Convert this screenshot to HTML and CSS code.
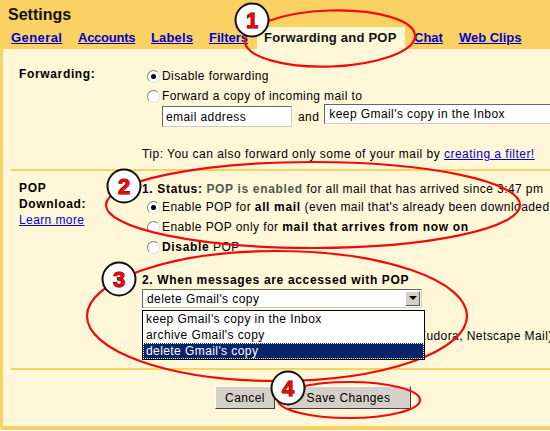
FILE: index.html
```html
<!DOCTYPE html>
<html lang="en">
<head>
<meta charset="utf-8">
<title>Settings</title>
<link rel="stylesheet" href="styles.css">
</head>
<body>
<div class="page">
  <header class="head">
    <h1 class="title">Settings</h1>
    <nav class="tabs">
      <a class="tab t-general" href="#">General</a>
      <a class="tab t-accounts" href="#">Accounts</a>
      <a class="tab t-labels" href="#">Labels</a>
      <a class="tab t-filters" href="#">Filters</a>
      <span class="tab active">Forwarding and POP</span>
      <a class="tab" href="#">Chat</a>
      <a class="tab" href="#">Web Clips</a>
    </nav>
  </header>
  <main class="panel">
    <section class="row forward">
      <div class="label">Forwarding:</div>
      <div class="body">
        <div class="opt"><span class="radio on"></span>Disable forwarding</div>
        <div class="opt"><span class="radio"></span>Forward a copy of incoming mail to</div>
        <div class="fields">
          <span class="input">email address</span>
          <span class="and">and</span>
          <span class="wide">keep Gmail's copy in the Inbox</span>
        </div>
        <div class="tip">Tip: You can also forward only some of your mail by <a href="#">creating a filter!</a></div>
      </div>
    </section>
    <section class="row pop">
      <div class="label">POP<br>Download:<br><a class="learn" href="#">Learn more</a></div>
      <div class="body">
        <div class="status"><b>1. Status:</b> <b class="grey">POP is enabled</b> for all mail that has arrived since 3:47 pm</div>
        <div class="opt"><span class="radio on"></span>Enable POP for&nbsp;<b>all mail</b>&nbsp;(even mail that's already been downloaded)</div>
        <div class="opt"><span class="radio"></span>Enable POP only for&nbsp;<b>mail that arrives from now on</b></div>
        <div class="opt"><span class="radio"></span><b>Disable</b>&nbsp;POP</div>
        <div class="when"><b>2. When messages are accessed with POP</b></div>
        <div class="combo">
          <div class="combo-box">delete Gmail's copy<span class="arrow"></span></div>
          <ul class="list">
            <li>keep Gmail's copy in the Inbox</li>
            <li>archive Gmail's copy</li>
            <li class="sel">delete Gmail's copy</li>
          </ul>
          <div class="behind">Eudora, Netscape Mail)</div>
        </div>
      </div>
    </section>
    <section class="actions">
      <button class="btn cancel" type="button">Cancel</button>
      <button class="btn save" type="button">Save Changes</button>
    </section>
  </main>
  <svg class="notes" width="550" height="431" viewBox="0 0 550 431" aria-hidden="true">
    <g class="rings">
      <ellipse cx="330" cy="38.5" rx="85" ry="28" transform="rotate(-2 330 38.5)"/>
      <ellipse cx="313" cy="205" rx="207" ry="43"/>
      <ellipse cx="277" cy="316" rx="190" ry="65"/>
      <ellipse cx="349" cy="400" rx="71" ry="18"/>
    </g>
    <g class="badges">
      <circle cx="252" cy="20" r="16.5"/>
      <circle cx="124" cy="186" r="16.5"/>
      <circle cx="119" cy="279" r="16.5"/>
      <circle cx="288" cy="388" r="16.5"/>
    </g>
    <g class="nums">
      <text x="252" y="28">1</text>
      <text x="124" y="194">2</text>
      <text x="119" y="287">3</text>
      <text x="288" y="396">4</text>
    </g>
  </svg>
</div>
</body>
</html>
```
FILE: styles.css
```css
* { box-sizing: border-box; }
html, body { margin: 0; padding: 0; background: #fff; }
body { font: 12px/16px "Liberation Sans", Arial, sans-serif; letter-spacing: .42px; color: #000; }
a { color: #00c; }
b { letter-spacing: .66px; }
.page { position: relative; width: 550px; height: 430px; overflow: hidden; background: #fad163; border-bottom-left-radius: 3px; }
.head { height: 49px; background: #fad163; display: flex; flex-direction: column; }
.title { margin: 0; padding: 5px 0 0 8px; height: 27px; font-size: 16px; line-height: 19px; font-weight: bold; letter-spacing: 0; color: #111; }
.tabs { display: flex; gap: 16px; height: 22px; padding-left: 11px; white-space: nowrap; }
.tab { flex: none; font-weight: bold; font-size: 13px; line-height: 22px; letter-spacing: 0; }
.t-general { width: 51px; letter-spacing: .42px; }
.t-accounts { width: 57px; letter-spacing: -.25px; }
.t-labels { width: 42px; letter-spacing: .15px; }
.t-filters { width: 41px; }
.tab.active { background: #fff7d7; color: #111; width: 148px; padding: 0 0 0 7px; margin: 0 -7px 0 -9px; letter-spacing: .22px; }
.panel { margin-left: 3px; height: 377px; background: #fff7d7; display: flex; flex-direction: column; overflow: hidden; }
.row { display: flex; margin-left: 8px; border-bottom: 2px solid #fad163; flex: none; }
.forward { height: 122px; padding-top: 17px; }
.pop { height: 199px; padding-top: 9px; }
.label { width: 131px; padding-left: 8px; font-weight: bold; font-size: 12px; letter-spacing: .65px; flex: none; }
.learn { font-weight: normal; letter-spacing: .4px; }
.body { flex: none; width: 420px; white-space: nowrap; }
.opt { display: flex; align-items: center; height: 20px; padding-left: 5px; }
.radio { width: 13px; height: 13px; border-radius: 50%; background: #fff; border: 1px solid #808080; border-right-color: #ddd; border-bottom-color: #ddd; margin-right: 2px; flex: none; position: relative; }
.radio.on::after { content: ""; position: absolute; left: 3px; top: 3px; width: 5px; height: 5px; border-radius: 50%; background: #000; }
.fields { display: flex; align-items: flex-start; padding-left: 20px; margin-top: -2px; height: 25px; }
.input { flex: none; width: 130px; height: 21px; margin-top: 2px; background: #fff; border: 1px solid; border-color: #666 #ccc #ccc #666; padding: 2px 3px; }
.and { flex: none; margin: 5px 5px 0 6px; }
.wide { flex: none; width: 300px; height: 20px; background: #fff; border: 1px solid; border-color: #666 #ccc #ccc #666; padding: 1px 4px; }
.tip { margin-top: 17px; letter-spacing: .48px; }
.status { height: 17px; padding-top: 1px; }
.grey { color: #4d5a55; }
.when { margin-top: 15px; height: 16px; }
.combo { position: relative; margin-top: 1px; }
.combo-box { position: relative; width: 280px; height: 19px; background: #fff; border: 1px solid; border-color: #666 #ccc #ccc #666; padding: 1px 4px; }
.arrow { position: absolute; right: 1px; top: 1px; width: 15px; height: 15px; background: #d4d0c8; border: 1px solid; border-color: #fff #555 #555 #fff; }
.arrow::after { content: ""; position: absolute; left: 3px; top: 4px; border: 4px solid transparent; border-top: 4px solid #000; border-bottom: 0; }
.list { position: absolute; z-index: 2; left: 0; top: 21px; width: 283px; height: 50px; margin: 0; padding: 0; list-style: none; background: #fff; border: 1px solid #000; }
.list li { height: 16px; padding-left: 3px; line-height: 16px; }
.list .sel { background: #0a246a; color: #fff; outline: 1px dotted #fff; outline-offset: -1px; }
.behind { position: absolute; left: 276px; top: 39px; }
.actions { display: flex; padding: 16px 0 0 212px; gap: 11px; }
.btn { font: 12px "Liberation Sans", Arial, sans-serif; letter-spacing: .42px; height: 23px; background: #d4d0c8; color: #000; border: 1px solid; border-color: #fff #404040 #404040 #fff; padding: 0; }
.cancel { width: 60px; }
.save { width: 125px; }
.notes { position: absolute; left: 0; top: 0; pointer-events: none; }
.rings ellipse { fill: none; stroke: #f00b0b; stroke-width: 2.2; }
.badges circle { fill: #fff; stroke: #111; stroke-width: 2; }
.nums text { font: bold 22px "Liberation Sans", Arial, sans-serif; letter-spacing: 0; text-anchor: middle; fill: #f00; stroke: #111; stroke-width: 1; paint-order: stroke; }
```
